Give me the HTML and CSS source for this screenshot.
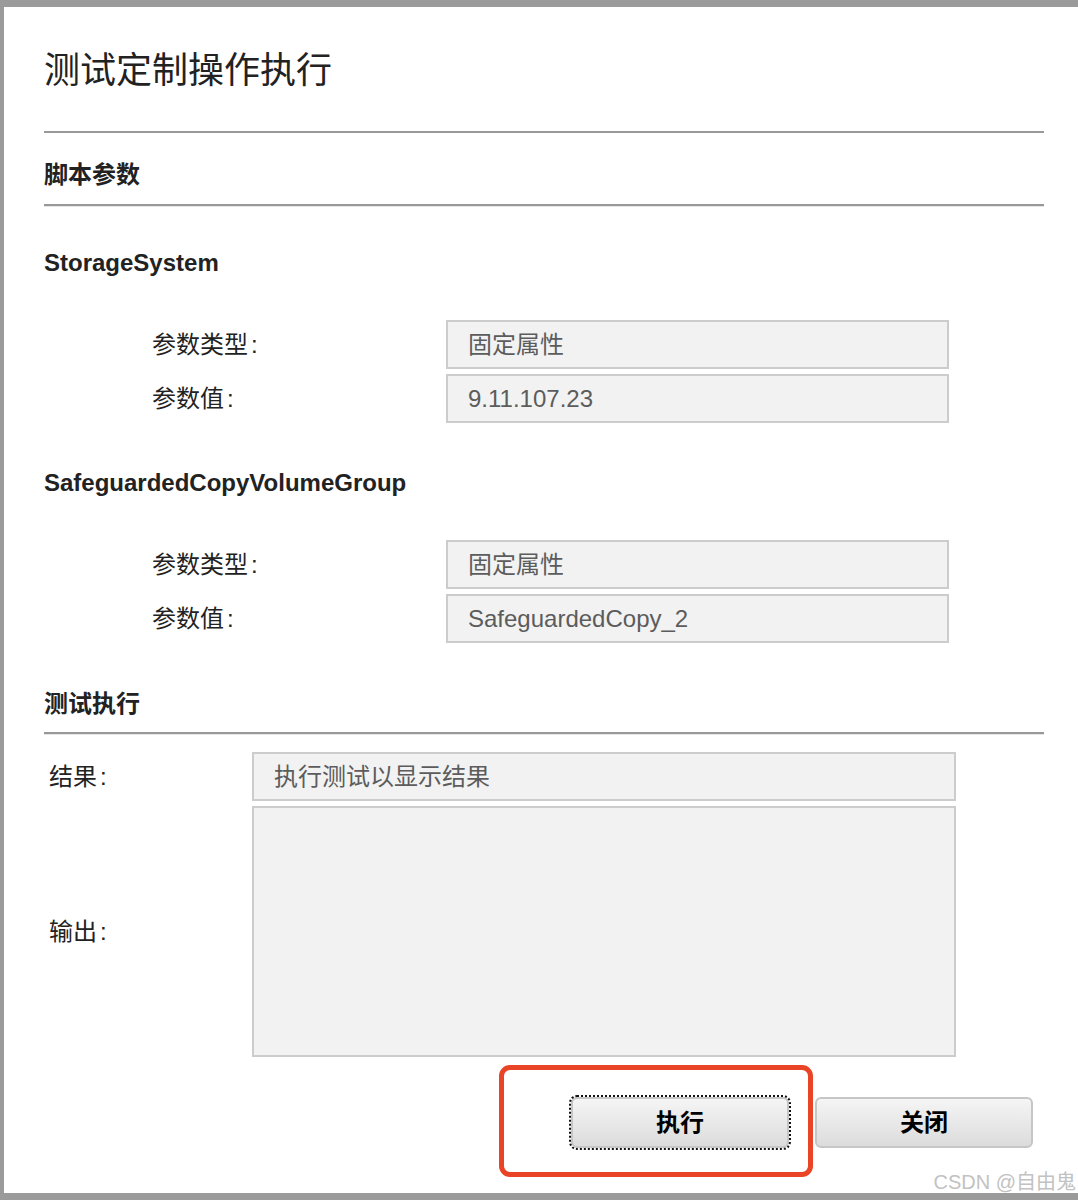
FILE: index.html
```html
<!DOCTYPE html>
<html lang="zh-CN">
<head>
<meta charset="utf-8">
<title>测试定制操作执行</title>
<link rel="stylesheet" href="styles.css">
</head>
<body>
<div class="frame">
  <div class="content">
    <h1 class="title">测试定制操作执行</h1>
    <div class="rule"></div>
    <h2 class="section">脚本参数</h2>
    <div class="rule shadow"></div>

    <h3 class="param-name first">StorageSystem</h3>
    <div class="param-grid">
      <div class="label">参数类型<span class="colon">:</span></div>
      <div class="field">固定属性</div>
      <div class="label">参数值<span class="colon">:</span></div>
      <div class="field">9.11.107.23</div>
    </div>

    <h3 class="param-name">SafeguardedCopyVolumeGroup</h3>
    <div class="param-grid">
      <div class="label">参数类型<span class="colon">:</span></div>
      <div class="field">固定属性</div>
      <div class="label">参数值<span class="colon">:</span></div>
      <div class="field">SafeguardedCopy_2</div>
    </div>

    <h2 class="section exec">测试执行</h2>
    <div class="rule shadow tight"></div>

    <div class="result-grid">
      <div class="label">结果<span class="colon">:</span></div>
      <div class="field wide">执行测试以显示结果</div>
      <div class="label">输出<span class="colon">:</span></div>
      <div class="output"></div>
    </div>

    <div class="actions">
      <button class="btn focused" type="button">执行</button>
      <button class="btn" type="button">关闭</button>
      <div class="highlight"></div>
    </div>
  </div>
  <div class="watermark">CSDN @自由鬼</div>
</div>
</body>
</html>
```
FILE: styles.css
```css
* { box-sizing: border-box; }

html, body {
  margin: 0;
  padding: 0;
  background: #ffffff;
}

body {
  font-family: "Liberation Sans", "Noto Sans CJK SC", sans-serif;
  color: #222222;
}

.frame {
  position: relative;
  width: 1078px;
  height: 1200px;
  border-top: 7px solid #9b9b9b;
  border-left: 4px solid #9b9b9b;
  border-bottom: 7px solid #9b9b9b;
  overflow: hidden;
}

.content {
  margin-left: 40px;
  width: 1000px;
}

.title {
  margin: 39px 0 0 0;
  font-size: 36px;
  line-height: 50px;
  font-weight: normal;
  color: #222222;
}

.rule {
  margin-top: 35px;
  border-top: 2px solid #999999;
}

.rule.shadow {
  margin-top: 13px;
  border-bottom: 1px solid #e6e6e6;
}

.rule.tight {
  margin-top: 12px;
}

.section {
  margin: 26px 0 0 0;
  font-size: 24px;
  line-height: 32px;
  font-weight: bold;
  color: #222222;
}

.section.exec {
  margin-top: 45px;
}

.param-name {
  margin: 44px 0 0 0;
  font-size: 24px;
  line-height: 32px;
  font-weight: bold;
  color: #222222;
}

.param-name.first {
  margin-top: 40px;
}

.param-grid {
  margin-top: 41px;
  padding-left: 108px;
  display: grid;
  grid-template-columns: 294px 503px;
  grid-auto-rows: 49px;
  row-gap: 5px;
  align-items: center;
}

.label {
  font-size: 24px;
  line-height: 32px;
  color: #222222;
}

.colon {
  margin-left: 3px;
}

.field {
  height: 49px;
  border: 2px solid #cccccc;
  background: #f2f2f2;
  padding-left: 20px;
  font-size: 24px;
  line-height: 45px;
  color: #5c5c5c;
  white-space: nowrap;
}

.result-grid {
  margin-top: 17px;
  padding-left: 5px;
  display: grid;
  grid-template-columns: 203px 704px;
  grid-template-rows: 49px 251px;
  row-gap: 5px;
  align-items: center;
}

.output {
  height: 251px;
  border: 2px solid #cccccc;
  background: #f2f2f2;
}

.actions {
  position: relative;
  margin-top: 40px;
  display: flex;
  justify-content: flex-end;
  gap: 26px;
  padding-right: 11px;
}

.btn {
  width: 218px;
  height: 51px;
  border: 2px solid #c6c6c6;
  border-radius: 6px;
  background: linear-gradient(#f5f5f5, #dcdcdc);
  font-family: "Liberation Sans", "Noto Sans CJK SC", sans-serif;
  font-size: 24px;
  font-weight: bold;
  color: #000000;
  padding: 0;
  line-height: 47px;
}

.btn.focused {
  outline: 2px dotted #111111;
  outline-offset: 0;
}

.highlight {
  position: absolute;
  left: 455px;
  top: -32px;
  width: 314px;
  height: 112px;
  border: 5px solid #ea4427;
  border-radius: 11px;
  pointer-events: none;
}

.watermark {
  position: absolute;
  right: 2px;
  bottom: 0;
  font-size: 20px;
  line-height: 22px;
  color: #c2c2c2;
  white-space: nowrap;
}
```
